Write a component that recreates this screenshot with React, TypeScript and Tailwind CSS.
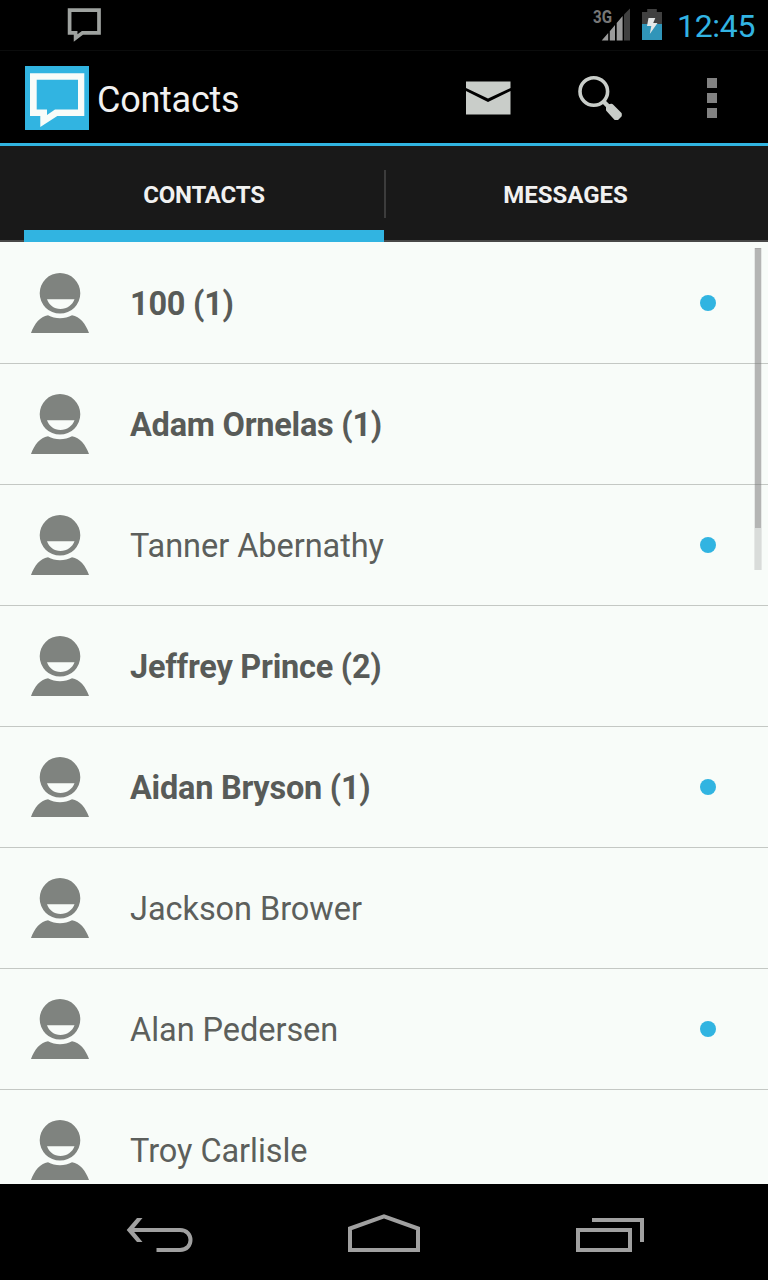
import React from "react";

type Contact = { name: string; unread?: number; online?: boolean };

const contacts: Contact[] = [
  { name: "100", unread: 1, online: true },
  { name: "Adam Ornelas", unread: 1 },
  { name: "Tanner Abernathy", online: true },
  { name: "Jeffrey Prince", unread: 2 },
  { name: "Aidan Bryson", unread: 1, online: true },
  { name: "Jackson Brower" },
  { name: "Alan Pedersen", online: true },
  { name: "Troy Carlisle" },
];

function Avatar() {
  return (
    <svg className="mb-[2px] h-[75px] w-[80px] shrink-0" viewBox="0 0 80 75" fill="#7f837f">
      <path
        fillRule="evenodd"
        d="M40 8a20.3 20.3 0 1 1 0 40.6a20.3 20.3 0 1 1 0-40.6ZM27 34.3C29 40 34 44 40.5 44S52.5 40 54.5 34.3Z"
      />
      <path d="M11 68C14.5 58.5 20 51.5 28 50.2C35 54.2 45 54.2 52 50.2C60 51.5 65.5 58.5 69 68Z" />
    </svg>
  );
}

function StatusBar() {
  return (
    <div className="flex h-[51px] shrink-0 border-b border-[#0b0c0c]">
      <svg className="ml-[64px] h-[50px] w-[40px]" viewBox="64 0 40 50">
        <path fill="none" stroke="#9fa3a0" strokeWidth="3.7" d="M69.6 10.1H99V32.8H82.5L75.6 38V32.8H69.6Z" />
      </svg>
      <div className="ml-auto flex">
        <div className="flex h-[50px] pt-[7px] text-[18px] leading-[20px] font-bold text-[#777]">
          <span className="w-[20px] origin-left scale-x-[0.84]">3G</span>
        </div>
        <svg className="-ml-[12px] h-[50px] w-[70px]" viewBox="601 0 70 50">
          <path fill="#9b9b9b" d="M601.7 40.5L608.2 33V40.5ZM609.8 31.2L615 25V40.5H609.8ZM616.7 23L622.6 16V40.5H616.7Z" />
          <path fill="#404040" d="M624 14.5L630 8.5V40.5H624Z" />
          <path fill="#404040" d="M642 12H647.2V9H656.8V12H662V24H642Z" />
          <path fill="#3095b9" d="M642 24H662V40H642Z" />
          <path fill="#e4e7e7" d="M648.5 18H655.3L653.2 23H657.5L649.8 34L651.3 26H647Z" />
        </svg>
        <span className="ml-[6px] w-[91px] text-[32px] leading-[52px] tracking-[-0.3px] text-[#32b4e3]">12:45</span>
      </div>
    </div>
  );
}

function ActionBar() {
  return (
    <header className="flex h-[95px] shrink-0 border-b-[3px] border-[#31b4e1] pt-[1px]">
      <svg className="mt-[14px] ml-[25px] h-[64px] w-[64px]" viewBox="0 0 64 64">
        <rect width="64" height="64" fill="#31b4e1" />
        <path fill="#f8fcf9" fillRule="evenodd" d="M5 7.3H59.3V50H32.3L15.3 61V50H5ZM11.7 13.7V43.5H22V49L30 43.5H53V13.7Z" />
      </svg>
      <h1 className="mt-[24px] ml-[8px] text-[36px] leading-[48px] tracking-[-0.25px] text-[#f1f1f1]">Contacts</h1>
      <svg className="mt-[14px] ml-auto h-[64px] w-[64px]" viewBox="456 66 64 64">
        <path fill="#c9cdc9" d="M466 81.5H510.5V88L488 98.5L466 88ZM466 91L488 102L510.5 91V114.5H466Z" />
      </svg>
      <svg className="mt-[14px] ml-[48px] h-[64px] w-[64px]" viewBox="568 66 64 64">
        <circle cx="593.8" cy="91.5" r="13.8" fill="none" stroke="#c9cdc9" strokeWidth="3.6" />
        <path stroke="#c9cdc9" strokeWidth="4.5" d="M603 101L608 106" />
        <path
          fill="#c9cdc9"
          stroke="#c9cdc9"
          strokeWidth="3.6"
          strokeLinejoin="round"
          d="M607.8 106.2L611.5 105.5L620 114L620 115.5L617.3 118.2L615.5 118.2L607.8 109.8Z"
        />
      </svg>
      <div className="mt-[26px] mr-[51px] ml-[75px] flex flex-col gap-[5px]">
        <i className="size-[10px] bg-[#828282]" />
        <i className="size-[10px] bg-[#828282]" />
        <i className="size-[10px] bg-[#828282]" />
      </div>
    </header>
  );
}

function Tabs() {
  return (
    <nav className="flex h-[96px] shrink-0 border-b-2 border-[#484848] bg-[#191919] px-6 text-[24px] font-bold text-[#f1f1f1]">
      <div className="-mb-[2px] flex h-[96px] w-[360px] items-center justify-center border-b-[12px] border-[#31b4e1] pt-[13px]">
        <span className="tracking-[-0.2px]">CONTACTS</span>
      </div>
      <div className="mt-6 h-12 w-[2px] bg-[#3c3c3c]" />
      <div className="flex h-[94px] flex-1 items-center justify-center pt-[3px] pl-[1px]">
        <span>MESSAGES</span>
      </div>
    </nav>
  );
}

function Row({ name, unread, online }: Contact) {
  return (
    <li className="flex h-[121px] shrink-0 items-center border-b border-[#c4c8c4] pr-[52px] pl-[20px]">
      <Avatar />
      <span
        className={
          unread
            ? "ml-[30px] pt-[3px] text-[32.5px] tracking-[-0.25px] font-bold text-[#585b58]"
            : "ml-[30px] pt-[3px] text-[32.5px] tracking-[-0.05px] text-[#5c5f5c]"
        }
      >
        {unread ? `${name} (${unread})` : name}
      </span>
      {online && <i className="ml-auto size-4 rounded-full bg-[#31b4e1]" />}
    </li>
  );
}

function NavigationBar() {
  return (
    <footer className="flex h-24 shrink-0 justify-between bg-black px-[120px]">
      <svg className="h-24 w-20" viewBox="120 1184 80 96" fill="none" stroke="#a0a0a0" strokeWidth="4">
        <path d="M130 1230H180C194 1230 194 1250 180 1250H156.5" />
        <path fill="#a0a0a0" stroke="none" d="M137 1218H142.5L132.5 1230L142.5 1242H137L126.7 1230Z" />
      </svg>
      <svg className="h-24 w-20" viewBox="344 1184 80 96" fill="none" stroke="#a0a0a0" strokeWidth="4">
        <path d="M350 1250V1228.5L384 1216.3L418 1228.5V1250Z" />
      </svg>
      <svg className="h-24 w-20" viewBox="568 1184 80 96" fill="none" stroke="#a0a0a0" strokeWidth="4">
        <path d="M578 1230H630V1250H578ZM592 1220H642V1242" />
      </svg>
    </footer>
  );
}

export default function App() {
  return (
    <div className="flex h-[1280px] w-[768px] flex-col overflow-hidden bg-black font-['Roboto',sans-serif]">
      <StatusBar />
      <ActionBar />
      <Tabs />
      <main className="relative min-h-0 flex-1 overflow-hidden bg-[#f8fcf9]">
        <ul className="flex flex-col pt-[1px]">
          {contacts.map((c) => (
            <Row key={c.name} {...c} />
          ))}
        </ul>
        <div className="absolute top-[6px] right-[6px] h-[322px] w-2 bg-[#777]/15 px-[1px]">
          <div className="h-[280px] border-t border-[#777]/20 bg-[#777]/45" />
          <div className="h-[42px] bg-[#777]/10" />
        </div>
      </main>
      <NavigationBar />
    </div>
  );
}
